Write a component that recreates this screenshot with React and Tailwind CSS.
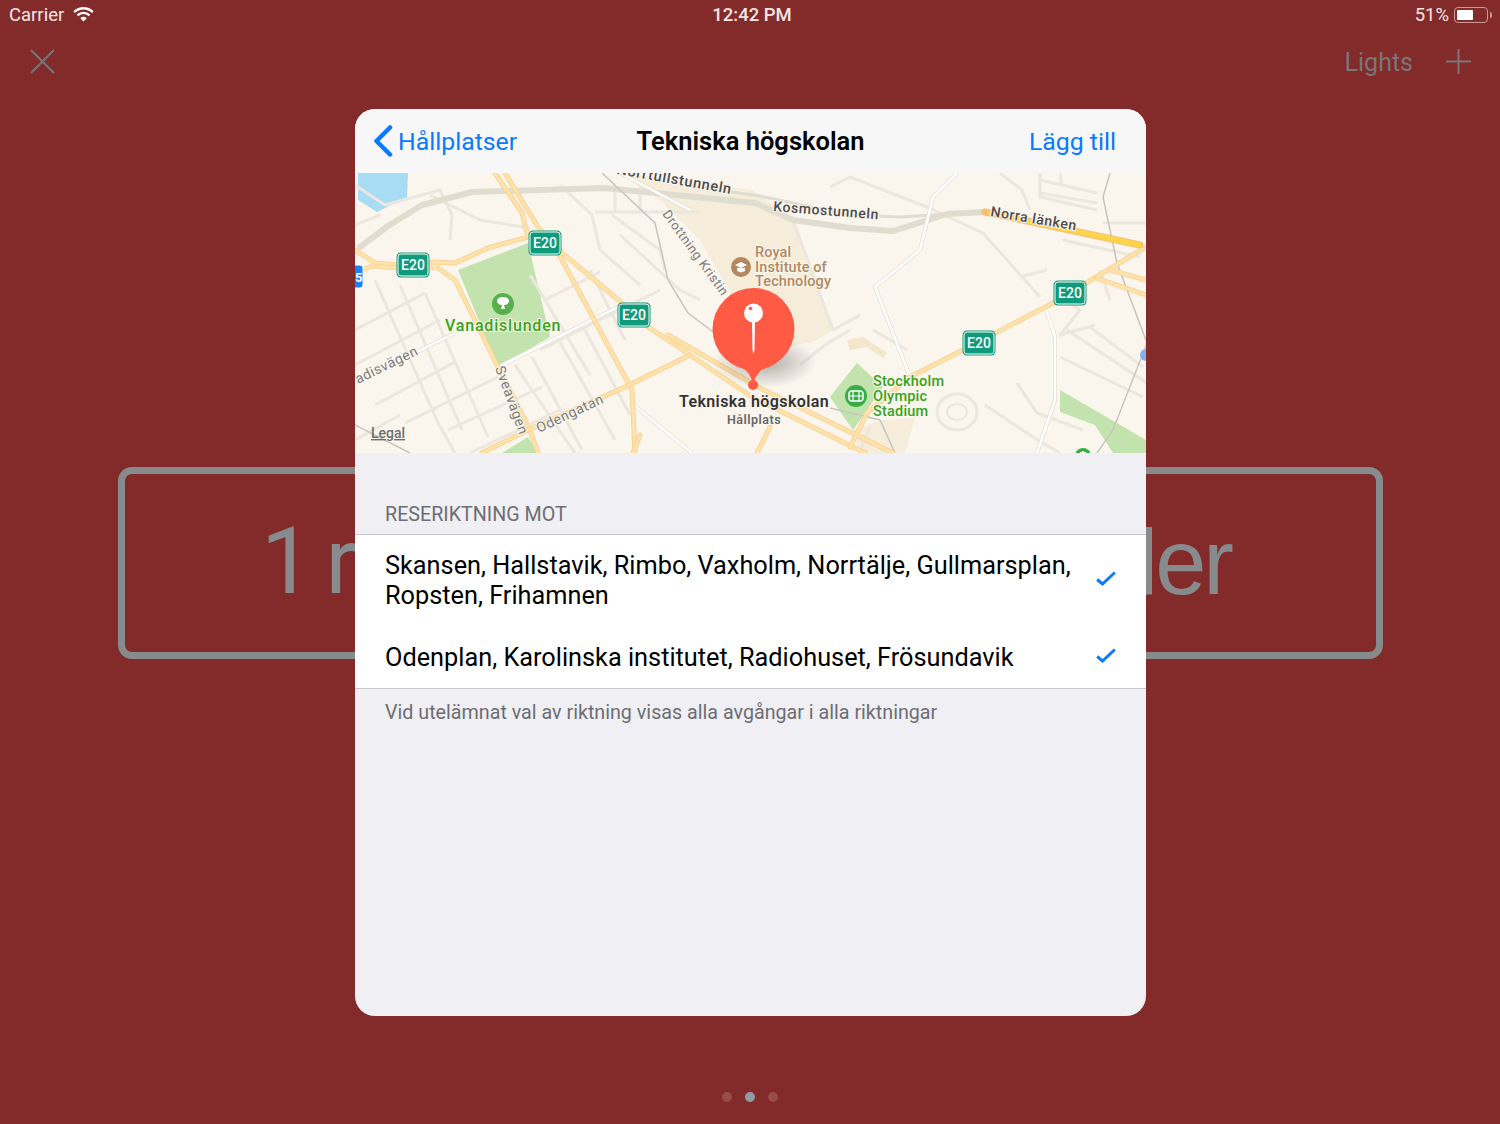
// minor streets, in page coordinates (the map's viewBox starts at 355,173)
const minorRoads = [
  // grid west of Sveavägen
  'M375 280L438 423L455 453', 'M400 285L462 430', 'M425 293L488 437', 'M355 330L425 293', 'M355 365L440 320',
  'M375 405L455 362', 'M355 440L400 415', 'M405 423L498 377', 'M448 430L542 387', 'M470 453L560 410',
  // grid east of Sveavägen
  'M515 365L575 453', 'M532 357L582 450', 'M560 342L615 440', 'M585 330L630 415', 'M545 300L600 272',
  'M530 275L590 375', 'M540 350L660 290', 'M590 270L625 340',
  // north of the tunnels
  'M355 185L385 205L440 190L452 215L450 240', 'M355 225L380 215', 'M430 195L480 220L530 228',
  'M560 185L592 215L600 250L640 285', 'M615 187L615 212', 'M595 212L700 212', 'M640 187L640 212',
  'M612 215L660 250L665 270', 'M620 235L680 290L700 300',
  // campus and east
  'M793 220L833 330L860 315', 'M830 187L850 177L927 207L983 233L1040 297', 'M873 330L907 350', 'M1020 277L1047 270',
  'M1017 383L1037 413L1083 430', 'M985 405L1033 437L1060 453', 'M1060 357L1143 397', 'M1067 330L1147 383',
  'M1090 327L1143 367', 'M1040 180L1097 193', 'M1040 193L1097 203', 'M1103 223L1147 223', 'M1063 240L1140 257',
  'M1040 173V197L1097 210', 'M1060 173L1062 187', 'M1000 173L1022 190L1030 210', 'M1100 270L1110 300',
  'M1065 300L1080 310L1060 335L1095 325', 'M860 453L870 425', 'M850 330L825 345L800 365',
]

const shields = [
  [413, 265],
  [545, 243],
  [634, 315],
  [979, 343],
  [1070, 293],
]

function MapLabel({ x, y, size = 14, color = '#4b4b4b', weight = 500, rotate = 0, anchor = 'start', spacing = 0.5, children }) {
  return (
    <text
      x={x}
      y={y}
      fontSize={size}
      fontWeight={weight}
      fill={color}
      textAnchor={anchor}
      letterSpacing={spacing}
      stroke="#fbf6ee"
      strokeWidth="2"
      paintOrder="stroke"
      transform={rotate ? `rotate(${rotate} ${x} ${y})` : undefined}
    >
      {children}
    </text>
  )
}

function MapView() {
  return (
    <svg viewBox="355 173 791 280" className="block w-[791px] h-[280px]">
      <defs>
        <radialGradient id="pinShadow">
          <stop offset="0%" stopColor="#000" stopOpacity="0.3" />
          <stop offset="100%" stopColor="#000" stopOpacity="0" />
        </radialGradient>
      </defs>
      <rect x="355" y="173" width="791" height="280" fill="#faf5ed" />

      {/* campus areas */}
      <path d="M620 173L752 190L793 220L833 330L813 342L770 350L735 300L700 240L660 200Z" fill="#f5ecd9" />
      <path d="M853 430L883 420L915 418L905 453L860 453Z" fill="#f5ecd9" />
      <path d="M847 340L863 337L887 353L883 358L867 347L850 350Z" fill="#f3e6cd" />

      {/* water and parks */}
      <path d="M358 173L408 173L407 197L377 212L358 200Z" fill="#a8dcf4" />
      <path d="M458 270L528 243L550 337L498 367Z" fill="#c2e3ad" />
      <path d="M502 453L528 437L538 453Z" fill="#c2e3ad" />
      <path d="M857 363L883 387L853 430L830 397Z" fill="#c2e3ad" />
      <path d="M1060 390L1146 440L1146 453L1113 453L1095 425L1060 412Z" fill="#c2e3ad" />

      {/* minor streets */}
      {minorRoads.map((d, i) => (
        <path key={i} d={d} fill="none" stroke="#ebe7de" strokeWidth="3" strokeLinejoin="round" />
      ))}

      {/* stadium ring */}
      <ellipse cx="957" cy="412" rx="20" ry="18" fill="none" stroke="#ebe7de" strokeWidth="3" />
      <ellipse cx="957" cy="412" rx="10" ry="8" fill="none" stroke="#ebe7de" strokeWidth="2" />

      {/* tunnels */}
      <g fill="none" stroke="#dfdcd0" strokeLinejoin="round" strokeLinecap="round">
        <path d="M360 247L388 226L422 205L472 192L605 188L755 203L793 220L850 228L893 231L947 214L985 212" strokeWidth="6" />
        <path d="M690 186L760 196L850 215L900 217L985 212" strokeWidth="3" />
      </g>

      {/* rail */}
      <g fill="none" stroke="#c6c5bf" strokeWidth="1.5">
        <path d="M602 173L655 223L668 280L688 313L728 343" />
        <path d="M1110 173L1103 197L1117 263L1147 343" />
        <path d="M1147 343L1113 430L1097 453" />
        <path d="M355 425L410 453" />
        <path d="M830 408L880 420L895 453" />
      </g>

      {/* white streets */}
      <g fill="none" strokeLinejoin="round">
        {['M957 173L933 197L920 250L875 287L910 377', 'M1047 312L1055 337L1055 400L1037 453', 'M355 383L415 353L455 333', 'M498 367L592 320L618 307', 'M636 407L692 453', 'M620 173L690 210'].map((d, i) => (
          <g key={i}>
            <path d={d} stroke="#e3dfd5" strokeWidth="4" />
            <path d={d} stroke="#ffffff" strokeWidth="2.5" />
          </g>
        ))}
      </g>

      {/* main roads: orange casing below, yellow fill on top */}
      <g fill="none" strokeLinejoin="round" strokeLinecap="round">
        {[
          'M355 250L375 263L398 265L432 262L455 263L488 248L528 237',
          'M355 273L372 266L398 268L432 268',
          'M438 268L455 280L498 367L530 430L538 453',
          'M495 173L522 213L528 237',
          'M505 173L538 227L555 247L622 303L648 327L668 340L752 397L865 453',
          'M555 247L632 390L635 453',
          'M482 453L528 430L625 387L690 355',
          'M668 335L760 388L893 453',
          'M757 453L770 427',
          'M633 453L640 435',
          'M850 447L867 413L910 377L963 350L1053 303L1146 247',
          'M1096 278L1146 295',
          'M1110 270L1146 280',
        ].map((d, i) => (
          <g key={i}>
            <path d={d} stroke="#f9d496" strokeWidth="5" />
            <path d={d} stroke="#fde3ab" strokeWidth="3" />
          </g>
        ))}
        <path d="M985 212L1140 245" stroke="#f9bd75" strokeWidth="7" />
        <path d="M990 213L1140 245" stroke="#fdd648" strokeWidth="5" />
      </g>

      {/* blue shield clipped by the left edge, poi at the right edge */}
      <rect x="345" y="265" width="18" height="23" rx="3" fill="#1a82f7" stroke="#fff" />
      <text x="355" y="282" fontSize="13" fontWeight="700" fill="#fff">5</text>
      <circle cx="1146" cy="355" r="6" fill="#7fb2ec" />

      {/* road shields */}
      {shields.map(([x, y]) => (
        <g key={x}>
          <rect x={x - 16.5} y={y - 12.5} width="33" height="25" rx="4.5" fill="#0f9a7b" />
          <rect x={x - 15} y={y - 11} width="30" height="22" rx="3" fill="#0f9a7b" stroke="#fff" strokeWidth="1" />
          <text x={x} y={y + 5} fontSize="14" fontWeight="500" fill="#fff" textAnchor="middle">E20</text>
        </g>
      ))}

      {/* pois */}
      <circle cx="503" cy="304" r="11" fill="#58b04c" />
      <path d="M503 297c-4 0-6 2-6 4s2 4 5 4l-1 4h4l-1-4c3 0 5-2 5-4s-2-4-6-4Z" fill="#fff" />
      <circle cx="856" cy="396" r="11" fill="#38ad45" />
      <rect x="849" y="391" width="14" height="10" rx="3" fill="none" stroke="#fff" strokeWidth="1.5" />
      <path d="M849 396H863M853 391V401M859 391V401" stroke="#fff" strokeWidth="1.2" />
      <circle cx="741" cy="267" r="10" fill="#b5875f" />
      <path d="M741 262l6 3-6 3-6-3ZM737 268v3l4 1.500 4-1.500v-3" fill="#fff" />
      <circle cx="1083" cy="456" r="8" fill="#38ad45" />
      <path d="M1083 451v5M1080 453h6" stroke="#fff" strokeWidth="2" />

      {/* labels */}
      <MapLabel x={731} y={194} rotate={10} anchor="end" size={14.500} spacing={0.7}>Norrtullstunneln</MapLabel>
      <MapLabel x={773} y={211} rotate={4.500} size={14} spacing={0.6}>Kosmostunneln</MapLabel>
      <MapLabel x={990} y={216} rotate={9.500} size={14} spacing={0.6}>Norra länken</MapLabel>
      <MapLabel x={662} y={214} rotate={54} size={13} weight={400} color="#7a7a7a">Drottning Kristin</MapLabel>
      <MapLabel x={755} y={257} color="#b08a63" size={14.500} spacing={0.1}>Royal</MapLabel>
      <MapLabel x={755} y={272} color="#b08a63" size={14.500} spacing={0.1}>Institute of</MapLabel>
      <MapLabel x={755} y={286} color="#b08a63" size={14.500} spacing={0.1}>Technology</MapLabel>
      <MapLabel x={445} y={331} size={16} color="#38a320" spacing={0.8}>Vanadislunden</MapLabel>
      <MapLabel x={358} y={384} rotate={-26} size={14} weight={400} color="#7a7a7a">adisvägen</MapLabel>
      <MapLabel x={495} y={368} rotate={70} size={14} weight={400} color="#7a7a7a">Sveavägen</MapLabel>
      <MapLabel x={539} y={433} rotate={-25} size={14} weight={400} color="#7a7a7a">Odengatan</MapLabel>
      <MapLabel x={873} y={386} color="#38a320" size={14.500} spacing={0.2}>Stockholm</MapLabel>
      <MapLabel x={873} y={401} color="#38a320" size={14.500} spacing={0.2}>Olympic</MapLabel>
      <MapLabel x={873} y={416} color="#38a320" size={14.500} spacing={0.2}>Stadium</MapLabel>
      <MapLabel x={754} y={407} anchor="middle" size={16} weight={600} color="#333" spacing={0.4}>Tekniska högskolan</MapLabel>
      <MapLabel x={754} y={424} anchor="middle" size={12.500} weight={600} color="#666">Hållplats</MapLabel>
      <text x={371} y={438} fontSize="14" fontWeight="500" fill="#6f6f6f" textDecoration="underline">Legal</text>

      {/* pin */}
      <ellipse cx="765" cy="362" rx="52" ry="26" fill="url(#pinShadow)" />
      <circle cx="753.500" cy="329" r="41" fill="#fe5a44" />
      <path d="M741 367Q751 372 753 385Q756 372 766 367Z" fill="#fe5a44" />
      <circle cx="753" cy="385" r="5" fill="#fe5a44" />
      <circle cx="753.500" cy="313" r="9.500" fill="#fff" />
      <path d="M752 320H755L754.500 350L753.500 354L752.500 350Z" fill="#fff" />
      <circle cx="750.500" cy="308.500" r="1.800" fill="#fe5a44" />
    </svg>
  )
}

function Check() {
  return (
    <svg viewBox="0 0 20 15" className="w-[20px] h-[15px] shrink-0 mb-[2px]">
      <path d="M1.200 8.500L6.500 13L18.800 1.500" fill="none" stroke="#0a7aff" strokeWidth="3" />
    </svg>
  )
}

function DirectionRow({ className, children }) {
  return (
    <div className={`flex items-center justify-between pl-[30px] pr-[30px] ${className}`}>
      <span className="w-[700px] mt-[3px] text-[25.300px] leading-[30px] text-black">{children}</span>
      <Check />
    </div>
  )
}

function Modal() {
  return (
    <div className="absolute left-[355px] top-[109px] w-[791px] h-[907px] rounded-[20px] overflow-hidden bg-[#efeff4] flex flex-col">
      <div className="relative h-[64px] shrink-0 bg-[#f7f7f8] flex items-center justify-between pl-[18px] pr-[30px]">
        <div className="flex items-center text-[#0a7aff] gap-[5px]">
          <svg viewBox="0 0 20 32" className="w-[20px] h-[32px]">
            <path d="M17 2.500L3.500 16L17 29.500" fill="none" stroke="#0a7aff" strokeWidth="4.500" strokeLinecap="round" strokeLinejoin="round" />
          </svg>
          <span className="mt-[2px] text-[24.800px]">Hållplatser</span>
        </div>
        <span className="absolute left-0 right-0 text-center text-[25.500px] font-semibold text-black">Tekniska högskolan</span>
        <span className="mt-[2px] text-[24.800px] text-[#0a7aff]">Lägg till</span>
      </div>
      <MapView />
      <div className="h-[81px] shrink-0 flex items-end pl-[30px] pb-[7px] text-[19.700px] leading-[24px] text-[#6d6d72]">
        RESERIKTNING MOT
      </div>
      <div className="bg-white border-y border-[#c8c7cc]">
        <DirectionRow className="h-[90px] pb-[2px]">
          Skansen, Hallstavik, Rimbo, Vaxholm, Norrtälje, Gullmarsplan, Ropsten, Frihamnen
        </DirectionRow>
        <DirectionRow className="h-[63px]">
          Odenplan, Karolinska institutet, Radiohuset, Frösundavik
        </DirectionRow>
      </div>
      <div className="pl-[30px] pt-[12px] text-[19.700px] leading-[24px] text-[#6d6d72]">
        Vid utelämnat val av riktning visas alla avgångar i alla riktningar
      </div>
    </div>
  )
}

export default function App() {
  return (
    <div className="relative w-[1500px] h-[1124px] overflow-hidden bg-[#832b2a] [font-family:Roboto,sans-serif]">
      {/* status bar */}
      <div className="relative h-[30px] pt-[2px] flex items-center justify-between pl-[9px] pr-[8px] text-[#f3e6e6] text-[18.500px]">
        <div className="flex items-center gap-[9px]">
          <span>Carrier</span>
          <svg viewBox="0 0 22 16" className="w-[21px] h-[15px] mb-[3px]">
            <path d="M1 5.500C7 0 15 0 21 5.500" fill="none" stroke="#fff" strokeWidth="2.500" />
            <path d="M4.500 9C8.500 5.500 13.500 5.500 17.500 9" fill="none" stroke="#fff" strokeWidth="2.500" />
            <path d="M7.500 12C10 10 12 10 14.500 12L11 15.500Z" fill="#fff" />
          </svg>
        </div>
        <span className="absolute left-[4px] right-0 text-center font-medium">12:42 PM</span>
        <div className="flex items-center gap-[5px]">
          <span>51%</span>
          <div className="w-[34px] h-[16px] -mt-[2px] rounded-[4px] border border-[#c99a9a] p-[2px]">
            <div className="h-full w-[16px] rounded-[1px] bg-white" />
          </div>
          <div className="w-[2px] h-[6px] -ml-[3px] -mt-[2px] rounded-r-sm bg-[#c99a9a]" />
        </div>
      </div>

      {/* dimmed nav */}
      <div className="h-[62px] flex items-center justify-between pl-[30px] pr-[29px] text-[#7b7678]">
        <svg viewBox="0 0 25 25" className="w-[25px] h-[25px]">
          <path d="M1 1L24 24M24 1L1 24" fill="none" stroke="#7b7678" strokeWidth="2" />
        </svg>
        <div className="flex items-center gap-[33px]">
          <span className="mt-[4px] text-[25px]">Lights</span>
          <svg viewBox="0 0 25 25" className="w-[25px] h-[25px]">
            <path d="M12.500 0V25M0 12.500H25" fill="none" stroke="#7b7678" strokeWidth="2" />
          </svg>
        </div>
      </div>

      {/* dimmed card behind the sheet */}
      <div className="mt-[375px] ml-[118px] w-[1265px] h-[192px] rounded-[14px] border-[7px] border-[#878b8d] flex items-center justify-between pl-[136px] pr-[145px] pb-[3px] text-[#878b8d] text-[92px]">
        <span className="tracking-[-5px]">1 r</span>
        <span className="tracking-[-3px] [font-family:'Liberation_Sans',sans-serif]">ler</span>
      </div>

      {/* page dots */}
      <div className="mt-[433px] flex justify-center items-center gap-[13px]">
        <div className="w-[10px] h-[10px] rounded-full bg-[#984d4d]" />
        <div className="w-[10px] h-[10px] rounded-full bg-[#8f9ca2]" />
        <div className="w-[10px] h-[10px] rounded-full bg-[#984d4d]" />
      </div>

      <Modal />
    </div>
  )
}
